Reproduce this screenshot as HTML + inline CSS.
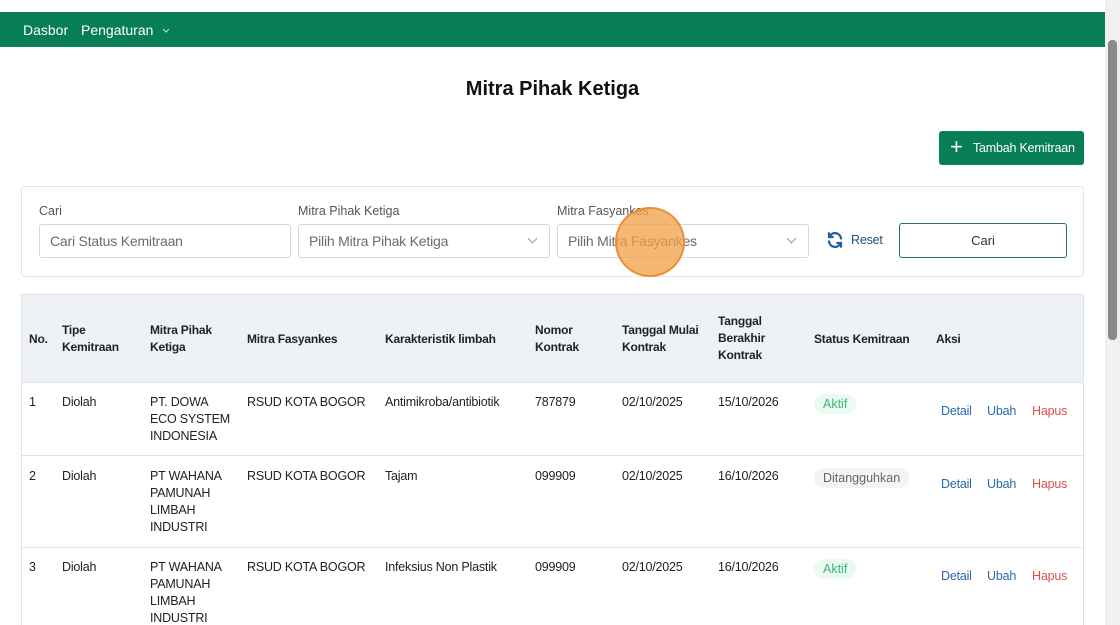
<!DOCTYPE html>
<html><head><meta charset="utf-8"><style>
*{box-sizing:border-box;margin:0;padding:0}
html,body{width:1120px;height:625px;overflow:hidden}
body{background:#fff;font-family:"Liberation Sans",sans-serif;color:#222;position:relative;font-size:13px}
.nav{position:absolute;top:12px;left:0;width:1105px;height:35px;background:#077d58;color:#fff;font-size:14px}
.nav span{position:absolute;top:10px}
h1{position:absolute;top:78px;left:0;width:1105px;text-align:center;font-size:20px;font-weight:bold;color:#111}
.add{position:absolute;left:939px;top:131px;width:145px;height:34px;background:#077d58;border-radius:3px;color:#fff;font-size:12.5px;line-height:34px;padding-left:34px;letter-spacing:-0.2px;white-space:nowrap}
.add:before{content:"+";position:absolute;left:11px;top:-1px;font-size:22px}
.filter{position:absolute;left:21px;top:186px;width:1063px;height:91px;border:1px solid #e2e4e8;border-radius:4px}
.lbl{position:absolute;top:204px;font-size:12.5px;color:#555}
.inp{position:absolute;top:224px;height:34px;border:1px solid #d4d7dc;border-radius:3px;font-size:14px;color:#6b6b6b;line-height:32px;padding-left:10px;letter-spacing:-0.2px}
.chev{position:absolute;right:13px;top:10px;width:7px;height:7px;border-right:1.5px solid #999;border-bottom:1.5px solid #999;transform:rotate(45deg)}
.cari{position:absolute;left:899px;top:223px;width:168px;height:35px;border:1px solid #2c6e68;border-radius:3px;text-align:center;line-height:33px;font-size:13px;color:#234}
.table{position:absolute;left:21px;top:294px;width:1063px;height:340px;border:1px solid #dfe2e6}
.thead{position:absolute;left:0;top:0;width:1061px;height:88px;background:#eef1f5;border-bottom:1px solid #dfe2e6}
.t{position:absolute;font-size:12.5px;line-height:17px;letter-spacing:-0.2px;white-space:nowrap}
.b{font-weight:bold;color:#222;font-size:12px}
.row{position:absolute;left:0;width:1061px;border-bottom:1px solid #dfe2e6}
.badge{position:absolute;border-radius:10px;padding:2px 9px;font-size:12.5px;line-height:16px}
.g{background:#eafaf2;color:#3cb47a}.gr{background:#f3f4f6;color:#666}
.bl{color:#2a6aa8}.rd{color:#d9534f}
.sb{position:absolute;left:1105px;top:0;width:15px;height:625px;background:#f0f0f0}
.sb div{position:absolute;left:3px;top:40px;width:9px;height:300px;background:#8a8a8a;border-radius:4px}
.dot{position:absolute;left:615px;top:207px;width:70px;height:70px;border-radius:50%;background:rgba(242,160,70,.75);border:2px solid rgba(230,140,50,.9)}
</style></head><body>
<div class="nav"><span style="left:23px">Dasbor</span><span style="left:81px">Pengaturan</span>
<svg style="position:absolute;left:162px;top:16px" width="8" height="6" viewBox="0 0 8 6"><path d="M1 1l3 3 3-3" fill="none" stroke="#b8d8cc" stroke-width="1.2"/></svg></div>
<h1>Mitra Pihak Ketiga</h1>
<div class="add">Tambah Kemitraan</div>
<div class="filter"></div>
<div class="lbl" style="left:39px">Cari</div>
<div class="lbl" style="left:298px">Mitra Pihak Ketiga</div>
<div class="lbl" style="left:557px">Mitra Fasyankes</div>
<div class="inp" style="left:39px;width:252px">Cari Status Kemitraan</div>
<div class="inp" style="left:298px;width:252px">Pilih Mitra Pihak Ketiga<div class="chev"></div></div>
<div class="inp" style="left:557px;width:252px">Pilih Mitra Fasyankes<div class="chev"></div></div>
<svg style="position:absolute;left:826px;top:231px" width="18" height="18" viewBox="0 0 24 24" fill="none" stroke="#1f5f9e" stroke-width="3" stroke-linecap="round"><path d="M20 10A8 8 0 0 0 5 7M4 14a8 8 0 0 0 15 3"/><path d="M4 3v5h5M20 21v-5h-5"/></svg>
<div class="t" style="left:851px;top:232px;color:#1f4f7e">Reset</div>
<div class="cari">Cari</div>
<div class="table">
<div class="thead"></div>
<div class="t b" style="left:7px;top:36px">No.</div>
<div class="t b" style="left:40px;top:27px">Tipe<br>Kemitraan</div>
<div class="t b" style="left:128px;top:27px">Mitra Pihak<br>Ketiga</div>
<div class="t b" style="left:225px;top:36px">Mitra Fasyankes</div>
<div class="t b" style="left:363px;top:36px">Karakteristik limbah</div>
<div class="t b" style="left:513px;top:27px">Nomor<br>Kontrak</div>
<div class="t b" style="left:600px;top:27px">Tanggal Mulai<br>Kontrak</div>
<div class="t b" style="left:696px;top:18px">Tanggal<br>Berakhir<br>Kontrak</div>
<div class="t b" style="left:792px;top:36px">Status Kemitraan</div>
<div class="t b" style="left:914px;top:36px">Aksi</div>

<div class="row" style="top:88px;height:73px"></div>
<div class="t" style="left:7px;top:99px">1</div><div class="t" style="left:40px;top:99px">Diolah</div>
<div class="t" style="left:128px;top:99px">PT. DOWA<br>ECO SYSTEM<br>INDONESIA</div>
<div class="t" style="left:225px;top:99px">RSUD KOTA BOGOR</div><div class="t" style="left:363px;top:99px">Antimikroba/antibiotik</div>
<div class="t" style="left:513px;top:99px">787879</div><div class="t" style="left:600px;top:99px">02/10/2025</div><div class="t" style="left:696px;top:99px">15/10/2026</div>
<div class="badge g" style="left:792px;top:99px">Aktif</div>
<div class="t bl" style="left:919px;top:108px">Detail</div><div class="t bl" style="left:965px;top:108px">Ubah</div><div class="t rd" style="left:1010px;top:108px">Hapus</div>

<div class="row" style="top:161px;height:92px"></div>
<div class="t" style="left:7px;top:173px">2</div><div class="t" style="left:40px;top:173px">Diolah</div>
<div class="t" style="left:128px;top:173px">PT WAHANA<br>PAMUNAH<br>LIMBAH<br>INDUSTRI</div>
<div class="t" style="left:225px;top:173px">RSUD KOTA BOGOR</div><div class="t" style="left:363px;top:173px">Tajam</div>
<div class="t" style="left:513px;top:173px">099909</div><div class="t" style="left:600px;top:173px">02/10/2025</div><div class="t" style="left:696px;top:173px">16/10/2026</div>
<div class="badge gr" style="left:792px;top:173px">Ditangguhkan</div>
<div class="t bl" style="left:919px;top:181px">Detail</div><div class="t bl" style="left:965px;top:181px">Ubah</div><div class="t rd" style="left:1010px;top:181px">Hapus</div>

<div class="t" style="left:7px;top:264px">3</div><div class="t" style="left:40px;top:264px">Diolah</div>
<div class="t" style="left:128px;top:264px">PT WAHANA<br>PAMUNAH<br>LIMBAH<br>INDUSTRI</div>
<div class="t" style="left:225px;top:264px">RSUD KOTA BOGOR</div><div class="t" style="left:363px;top:264px">Infeksius Non Plastik</div>
<div class="t" style="left:513px;top:264px">099909</div><div class="t" style="left:600px;top:264px">02/10/2025</div><div class="t" style="left:696px;top:264px">16/10/2026</div>
<div class="badge g" style="left:792px;top:264px">Aktif</div>
<div class="t bl" style="left:919px;top:273px">Detail</div><div class="t bl" style="left:965px;top:273px">Ubah</div><div class="t rd" style="left:1010px;top:273px">Hapus</div>
</div>
<div class="dot"></div>
<div class="sb"><div></div></div>
</body></html>
